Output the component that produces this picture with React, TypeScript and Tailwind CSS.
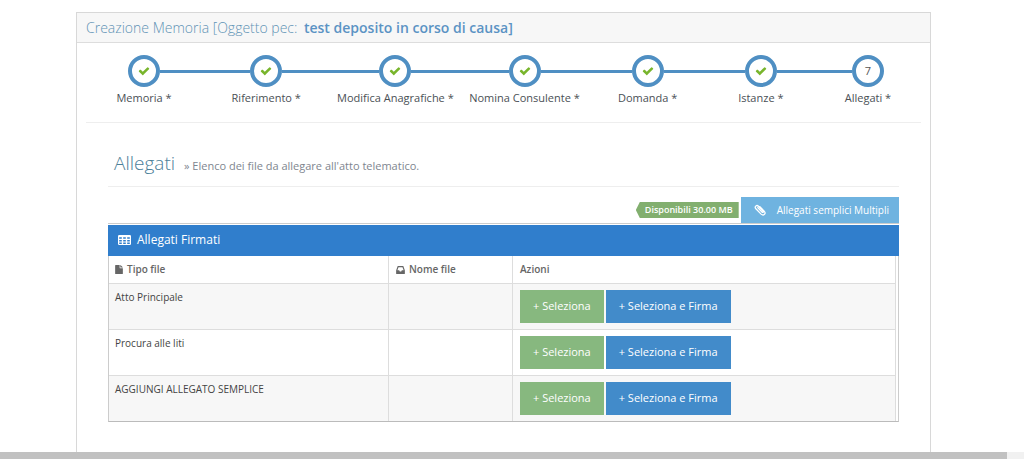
import type { ReactNode } from "react";

type IconProps = { className?: string };

function CheckIcon({ className }: IconProps) {
  return (
    <svg viewBox="0 0 1792 1792" className={className} fill="currentColor" aria-hidden="true">
      <path d="M1671 566q0 40-28 68l-724 724-136 136q-28 28-68 28t-68-28l-136-136-362-362q-28-28-28-68t28-68l136-136q28-28 68-28t68 28l294 295 656-657q28-28 68-28t68 28l136 136q28 28 28 68z" />
    </svg>
  );
}

function TableIcon({ className }: IconProps) {
  return (
    <svg viewBox="0 0 13 12" className={className} fill="currentColor" aria-hidden="true">
      <path
        fillRule="evenodd"
        d="M1.200 1h10.600a1.200 1.200 0 0 1 1.200 1.200v7.600a1.200 1.200 0 0 1-1.200 1.200H1.200a1.200 1.200 0 0 1-1.200-1.200v-7.600a1.200 1.200 0 0 1 1.200-1.200zM1.200 3.200v1.500h2.600V3.200zM5.200 3.200v1.500h2.600V3.200zM9.200 3.200v1.500h2.600V3.200zM1.200 5.900v1.500h2.600V5.900zM5.200 5.900v1.500h2.600V5.900zM9.200 5.900v1.500h2.600V5.900zM1.200 8.500v1.400h2.600V8.500zM5.200 8.500v1.400h2.600V8.500zM9.200 8.500v1.400h2.600V8.500z"
      />
    </svg>
  );
}

function FileIcon({ className }: IconProps) {
  return (
    <svg viewBox="0 0 12 14" className={className} fill="currentColor" aria-hidden="true">
      <path d="M7 0v4.200c0 .5.3.8.8.8H12v8.200c0 .5-.3.8-.8.8H.8c-.5 0-.8-.3-.8-.8V.8C0 .3.3 0 .8 0zM8 0c.3.1.5.2.7.4l2.900 2.900c.2.2.3.4.4.7H8z" />
    </svg>
  );
}

function InboxIcon({ className }: IconProps) {
  return (
    <svg viewBox="0 0 12 11" className={className} fill="currentColor" aria-hidden="true">
      <path
        fillRule="evenodd"
        d="M2.700 0h6.600c.4 0 .7.2.8.6L11.800 5.500c.1.3.2.7.2 1v3.700c0 .4-.3.8-.8.8H.8c-.5 0-.8-.4-.8-.8V6.500c0-.3.1-.7.2-1L1.900.6C2 .2 2.300 0 2.700 0zM3.300 1.700L1.700 6h2.500l.8 1.700h2L7.800 6h2.500L8.700 1.700z"
      />
    </svg>
  );
}

function PaperclipIcon({ className }: IconProps) {
  return (
    <svg viewBox="0 0 14 14" className={className} fill="none" stroke="currentColor" strokeWidth="1.500" strokeLinecap="round" aria-hidden="true">
      <path d="M4.300 4.200l5 5.200c1 1 2.200-.2 1.300-1.200L5.200 2.600C3 .5.1 3.300 2.200 5.500l6.100 6.300c2.900 2.600 6.200-.7 3.600-3.500L6.900 3.200" />
    </svg>
  );
}

const steps = ["Memoria *", "Riferimento *", "Modifica Anagrafiche *", "Nomina Consulente *", "Domanda *", "Istanze *", "Allegati *"];

const rows = ["Atto Principale", "Procura alle liti", "AGGIUNGI ALLEGATO SEMPLICE"];

function Steps() {
  return (
    <ol className="grid grid-cols-[116fr_128fr_130fr_128fr_118fr_108fr_106fr]">
      {steps.map((label, i) => {
        const first = i === 0;
        const last = i === steps.length - 1;
        return (
          <li key={label} className="flex flex-col items-center">
            <div className="flex w-full items-center">
              <span className={first ? "h-[3px] flex-1" : "h-[3px] flex-1 bg-[#4f8fc3]"} />
              <span className="flex size-8 items-center justify-center rounded-full border-4 border-[#4f8fc3] bg-white text-[11px] text-[#555]">
                {last ? i + 1 : <CheckIcon className="size-3 text-[#78b52c]" />}
              </span>
              <span className={last ? "h-[3px] flex-1" : "h-[3px] flex-1 bg-[#4f8fc3]"} />
            </div>
            <span className="mt-[3px] text-[11px] leading-4 whitespace-nowrap text-[#4a5055]">{label}</span>
          </li>
        );
      })}
    </ol>
  );
}

function HeadCell({ className, children }: { className: string; children: ReactNode }) {
  return (
    <th className={`${className} border-r border-b border-[#ddd] text-left text-[10px] font-semibold text-[#666]`}>
      <span className="flex items-center gap-1">{children}</span>
    </th>
  );
}

export default function App() {
  return (
    <div className="flex min-h-screen flex-col bg-white font-['Open_Sans',sans-serif] text-[11px] text-[#444]">
      <main className="flex flex-1 flex-col pt-3 pr-[93px] pl-[76px]">
        <section className="flex-1 border border-b-0 border-[#d8d8d8]">
          <header className="border-b border-[#ddd] bg-[#f7f7f7] px-[9px]">
            <h1 className="text-[14px] leading-[29px] font-light text-[#5f93b5]">
              Creazione Memoria [Oggetto pec:{" "}
              <strong className="ml-[3px] font-semibold text-[#5b93c4]">test deposito in corso di causa]</strong>
            </h1>
          </header>

          <div className="px-[9px] pt-3">
            <Steps />
            <hr className="mt-4 border-[#eee]" />

            <div className="px-[22px] pb-[30px]">
              <div className="flex items-baseline gap-[9px] border-b border-[#eee] px-[6px] pt-[26px] pb-[9px]">
                <h2 className="text-[19px] leading-7 font-light text-[#4c8099]">Allegati</h2>
                <p className="text-[11px] text-[#80868f]">» Elenco dei file da allegare all'atto telematico.</p>
              </div>

              <div className="mt-[10px] flex items-start justify-end gap-[2px] border-b border-[#ccc]">
                <span className="mt-[5px] flex h-4 items-center bg-[#82af6f] pr-[6px] pb-px pl-[9px] text-[9px] font-semibold text-white [clip-path:polygon(4px_0,100%_0,100%_100%,4px_100%,0_50%)]">
                  Disponibili 30.00 MB
                </span>
                <button type="button" className="flex h-[26px] items-center gap-2 bg-[#6fb3e0] px-[10px] text-[10px] text-white">
                  <PaperclipIcon className="mx-[3px] size-3" />
                  Allegati semplici Multipli
                </button>
              </div>

              <h3 className="mt-px flex h-[31px] items-center gap-[6px] bg-[#307ecc] px-[10px] pb-px text-[12px] text-white">
                <TableIcon className="h-3 w-[13px]" />
                Allegati Firmati
              </h3>
              <table className="w-full table-fixed border-separate border-spacing-0 border-x border-b border-[#ccc] border-b-[#bbb] pr-[2px]">
                <thead>
                  <tr className="h-7">
                    <HeadCell className="w-[280px] px-[6px]">
                      <FileIcon className="h-[9px] w-[8px]" />
                      Tipo file
                    </HeadCell>
                    <HeadCell className="w-[124px] px-[7px]">
                      <InboxIcon className="h-2 w-[9px]" />
                      Nome file
                    </HeadCell>
                    <HeadCell className="px-[7px]">Azioni</HeadCell>
                  </tr>
                </thead>
                <tbody>
                  {rows.map((name) => (
                    <tr key={name} className="group h-[46px] odd:bg-[#f7f7f7] last:h-[45px]">
                      <td className="border-r border-b border-[#ddd] px-[6px] pt-[5px] align-top text-[10px] leading-4 group-last:border-b-0">
                        {name}
                      </td>
                      <td className="border-r border-b border-[#ddd] group-last:border-b-0" />
                      <td className="border-r border-b border-[#ddd] px-[7px] py-0 group-last:border-b-0">
                        <div className="flex gap-[2px]">
                          <button type="button" className="h-[33px] bg-[#87b87f] px-[13px] text-white">
                            + Seleziona
                          </button>
                          <button type="button" className="h-[33px] bg-[#428bca] px-[13px] text-white">
                            + Seleziona e Firma
                          </button>
                        </div>
                      </td>
                    </tr>
                  ))}
                </tbody>
              </table>
            </div>
          </div>
        </section>
      </main>

      <div className="flex h-[7px] bg-[#f1f1f1] pr-[17px]">
        <div className="flex-1 bg-[#c1c1c1]" />
      </div>
    </div>
  );
}
